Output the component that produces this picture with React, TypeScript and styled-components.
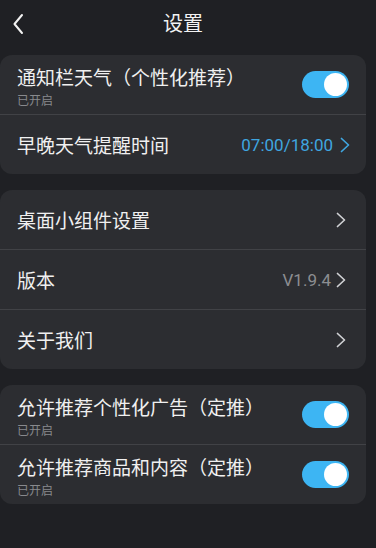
import React from "react";
import styled, { createGlobalStyle } from "styled-components";

const Global = createGlobalStyle`
  html, body { margin: 0; padding: 0; background: #1f2024; }
  body { font-family: "Noto Sans CJK SC", "Noto Sans", Roboto, sans-serif; }
  * { box-sizing: border-box; }
`;

const Page = styled.div`
  width: 376px;
  height: 548px;
  background: #1f2024;
  overflow: hidden;
`;

const Column = styled.div`
  width: 366px;
  display: flex;
  flex-direction: column;
  gap: 16px;
`;

const Header = styled.div`
  height: 55px;
  position: relative;
  display: flex;
  align-items: center;
  justify-content: center;
  margin-bottom: -16px;
`;

const BackButton = styled.div`
  position: absolute;
  left: 11px;
  top: 13px;
  width: 18px;
  height: 22px;
  display: flex;
  align-items: center;
`;

const Title = styled.div`
  color: #f2f2f2;
  font-size: 20px;
  line-height: 28px;
  margin-top: -10px;
`;

const Card = styled.div`
  background: #2c2d31;
  border-radius: 12px;
  display: flex;
  flex-direction: column;
`;

const Row = styled.div`
  height: 59px;
  display: flex;
  align-items: center;
  padding: 0 16px 0 17px;
`;

const Divider = styled.div`
  height: 1px;
  background: #414246;
`;

const TextBlock = styled.div<{ $two?: boolean }>`
  flex: 1;
  display: flex;
  flex-direction: column;
  padding-top: ${(p) => (p.$two ? "3px" : "0")};
`;

const Label = styled.div`
  color: #f0f0f0;
  font-size: 19px;
  line-height: 24px;
  white-space: nowrap;
`;

const Sub = styled.div`
  color: #88898d;
  font-size: 12px;
  line-height: 16px;
  margin-top: 3px;
`;

const Value = styled.div<{ $blue?: boolean }>`
  font-family: Roboto, "Noto Sans", sans-serif;
  font-size: 17px;
  line-height: 24px;
  color: ${(p) => (p.$blue ? "#3fa6e0" : "#8c8d91")};
  margin-right: ${(p) => (p.$blue ? "7px" : "5px")};
`;

const Chevron = styled.svg<{ $gap: number }>`
  width: 10px;
  height: 16px;
  flex: none;
  margin-right: ${(p) => p.$gap}px;
`;

const Toggle = styled.div`
  width: 47px;
  height: 27px;
  border-radius: 14px;
  background: #3db5f3;
  position: relative;
  flex: none;
  margin-right: 1px;
`;

const Knob = styled.div`
  position: absolute;
  right: 2px;
  top: 2px;
  width: 23px;
  height: 23px;
  border-radius: 50%;
  background: #ffffff;
`;

const Arrow = ({ color = "#cfd0d3", gap = 4 }: { color?: string; gap?: number }) => (
  <Chevron viewBox="0 0 10 16" $gap={gap}>
    <path d="M1.5 1.5 L8.5 8 L1.5 14.5" fill="none" stroke={color} strokeWidth="1.7" strokeLinecap="round" strokeLinejoin="round" />
  </Chevron>
);

const Switch = () => (
  <Toggle>
    <Knob />
  </Toggle>
);

export default function App() {
  return (
    <Page>
      <Global />
      <Column>
        <Header>
          <BackButton>
            <svg width="14" height="22" viewBox="0 0 14 22">
              <path d="M11 2 L3.5 11 L11 20" fill="none" stroke="#f2f2f2" strokeWidth="2" strokeLinecap="round" strokeLinejoin="round" />
            </svg>
          </BackButton>
          <Title>设置</Title>
        </Header>
        <Card>
          <Row>
            <TextBlock $two>
              <Label>通知栏天气（个性化推荐）</Label>
              <Sub>已开启</Sub>
            </TextBlock>
            <Switch />
          </Row>
          <Divider />
          <Row>
            <TextBlock>
              <Label>早晚天气提醒时间</Label>
            </TextBlock>
            <Value $blue>07:00/18:00</Value>
            <Arrow color="#3fa6e0" gap={0} />
          </Row>
        </Card>
        <Card>
          <Row>
            <TextBlock>
              <Label>桌面小组件设置</Label>
            </TextBlock>
            <Arrow />
          </Row>
          <Divider />
          <Row>
            <TextBlock>
              <Label>版本</Label>
            </TextBlock>
            <Value>V1.9.4</Value>
            <Arrow />
          </Row>
          <Divider />
          <Row>
            <TextBlock>
              <Label>关于我们</Label>
            </TextBlock>
            <Arrow />
          </Row>
        </Card>
        <Card>
          <Row>
            <TextBlock $two>
              <Label>允许推荐个性化广告（定推）</Label>
              <Sub>已开启</Sub>
            </TextBlock>
            <Switch />
          </Row>
          <Divider />
          <Row>
            <TextBlock $two>
              <Label>允许推荐商品和内容（定推）</Label>
              <Sub>已开启</Sub>
            </TextBlock>
            <Switch />
          </Row>
        </Card>
      </Column>
    </Page>
  );
}
